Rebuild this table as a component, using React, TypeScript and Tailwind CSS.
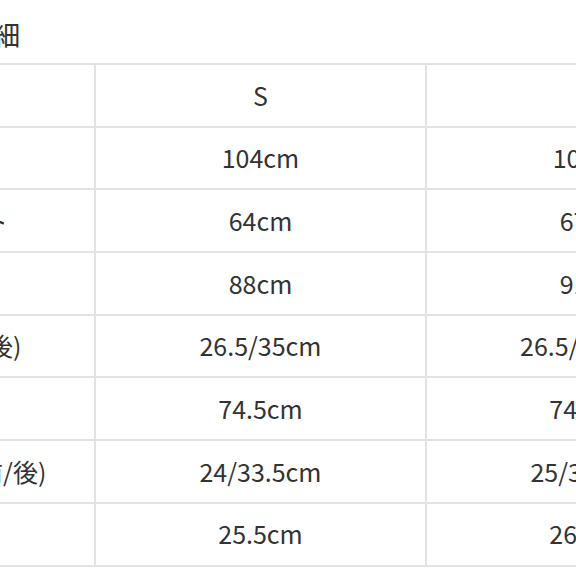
type SizeRow = {
  label: string;
  s: string;
  m: string;
};

const sizeRows: SizeRow[] = [
  { label: 'サイズ', s: 'S', m: 'M' },
  { label: '総丈', s: '104cm', m: '108cm' },
  { label: 'ウエスト', s: '64cm', m: '67cm' },
  { label: 'ヒップ', s: '88cm', m: '91cm' },
  { label: '股上(前/後)', s: '26.5/35cm', m: '26.5/35.5cm' },
  { label: '股下', s: '74.5cm', m: '74.5cm' },
  { label: 'ワタリ幅(前/後)', s: '24/33.5cm', m: '25/34.5cm' },
  { label: '裾幅', s: '25.5cm', m: '26.5cm' },
];

export default function App() {
  return (
    <div
      className="h-[576px] w-[576px] overflow-hidden bg-white text-[#333]"
      style={{ fontFamily: '"Noto Sans CJK JP", "Noto Sans", sans-serif' }}
    >
      <div className="ml-[-180px] w-[940px]">
        <h2 className="flex h-[63px] items-center pl-[61px] pt-[4px] text-[28px] font-normal leading-none">
          サイズ詳細
        </h2>
        <table className="border-collapse">
          <tbody>
            {sizeRows.map((row) => (
              <tr key={row.label} className="h-[62.7px]">
                <td className="w-[274px] border-2 border-[#e2e2e2] text-center text-[25px]">
                  {row.label}
                </td>
                <td className="w-[331px] border-2 border-[#e2e2e2] text-center text-[25px]">
                  {row.s}
                </td>
                <td className="w-[331px] border-2 border-[#e2e2e2] text-center text-[25px]">
                  {row.m}
                </td>
              </tr>
            ))}
          </tbody>
        </table>
      </div>
    </div>
  );
}
